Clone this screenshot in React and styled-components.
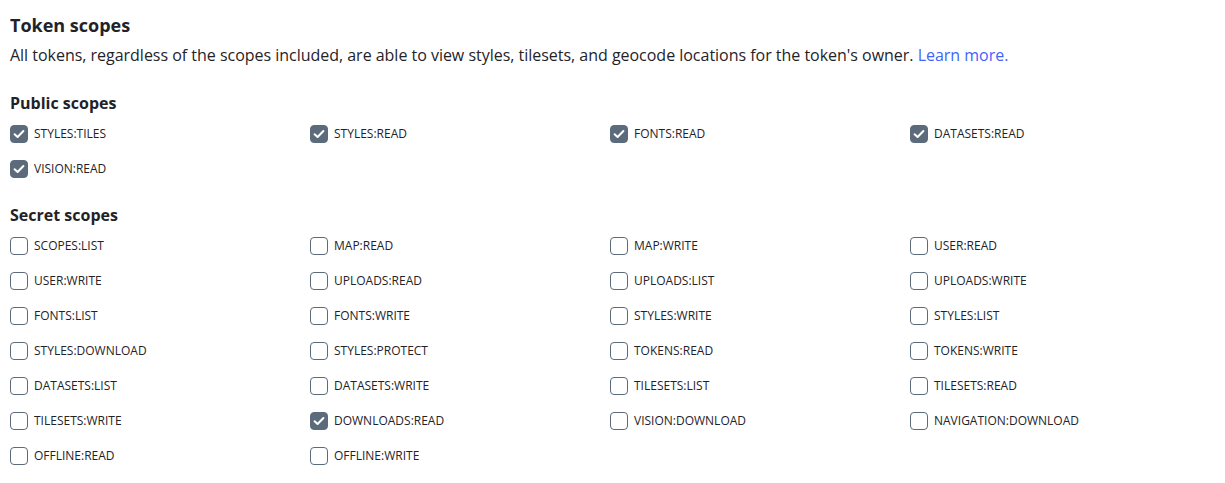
import React from 'react';
import styled, { createGlobalStyle } from 'styled-components';

const GlobalStyle = createGlobalStyle`
  body {
    margin: 0;
    background: #fff;
    font-family: 'Open Sans', 'Liberation Sans', sans-serif;
    color: #1f2328;
  }
`;

const Page = styled.div`
  padding: 13px 10px 20px;
`;

const Title = styled.h2`
  margin: 0;
  font-size: 18px;
  line-height: 24px;
  font-weight: 700;
`;

const Description = styled.p`
  margin: 6px 0 0;
  font-size: 16px;
  line-height: 24px;
  letter-spacing: -0.02px;
`;

const Link = styled.a`
  color: #4264fb;
  text-decoration: none;
`;

const SectionTitle = styled.h3`
  margin: ${p => p.$first ? '24px' : '25px'} 0 0;
  font-size: 16px;
  line-height: 24px;
  font-weight: 700;
`;

const Grid = styled.div`
  display: grid;
  grid-template-columns: repeat(4, 300px);
  row-gap: 17px;
  margin-top: 10px;
`;

const Option = styled.label`
  display: flex;
  align-items: center;
  gap: 6px;
  font-size: 12px;
  line-height: 18px;
  color: #1f2328;
  cursor: pointer;
`;

const Box = styled.span`
  width: 18px;
  height: 18px;
  box-sizing: border-box;
  border-radius: 4px;
  border: 1.5px solid #5c6b7b;
  background: ${p => p.$checked ? '#5c6b7b' : '#fff'};
  display: flex;
  align-items: center;
  justify-content: center;
  flex-shrink: 0;
`;

const Check = () => (
  <svg width="14" height="14" viewBox="0 0 14 14" fill="none">
    <path d="M2.6 7.2 L5.6 10 L11.4 4" stroke="#fff" strokeWidth="2" strokeLinecap="round" strokeLinejoin="round" />
  </svg>
);

const publicScopes = ['STYLES:TILES', 'STYLES:READ', 'FONTS:READ', 'DATASETS:READ', 'VISION:READ'];

const secretScopes = [
  'SCOPES:LIST', 'MAP:READ', 'MAP:WRITE', 'USER:READ',
  'USER:WRITE', 'UPLOADS:READ', 'UPLOADS:LIST', 'UPLOADS:WRITE',
  'FONTS:LIST', 'FONTS:WRITE', 'STYLES:WRITE', 'STYLES:LIST',
  'STYLES:DOWNLOAD', 'STYLES:PROTECT', 'TOKENS:READ', 'TOKENS:WRITE',
  'DATASETS:LIST', 'DATASETS:WRITE', 'TILESETS:LIST', 'TILESETS:READ',
  'TILESETS:WRITE', 'DOWNLOADS:READ', 'VISION:DOWNLOAD', 'NAVIGATION:DOWNLOAD',
  'OFFLINE:READ', 'OFFLINE:WRITE',
];

const checkedSecret = ['DOWNLOADS:READ'];

const ScopeOption = ({ name, checked }) => (
  <Option>
    <Box $checked={checked}>{checked && <Check />}</Box>
    {name}
  </Option>
);

const App = () => (
  <Page>
    <GlobalStyle />
    <Title>Token scopes</Title>
    <Description>
      All tokens, regardless of the scopes included, are able to view styles, tilesets, and geocode locations for the token's owner. <Link href="#">Learn more.</Link>
    </Description>

    <SectionTitle $first>Public scopes</SectionTitle>
    <Grid>
      {publicScopes.map(s => <ScopeOption key={s} name={s} checked />)}
    </Grid>

    <SectionTitle>Secret scopes</SectionTitle>
    <Grid>
      {secretScopes.map(s => <ScopeOption key={s} name={s} checked={checkedSecret.includes(s)} />)}
    </Grid>
  </Page>
);

export default App;
